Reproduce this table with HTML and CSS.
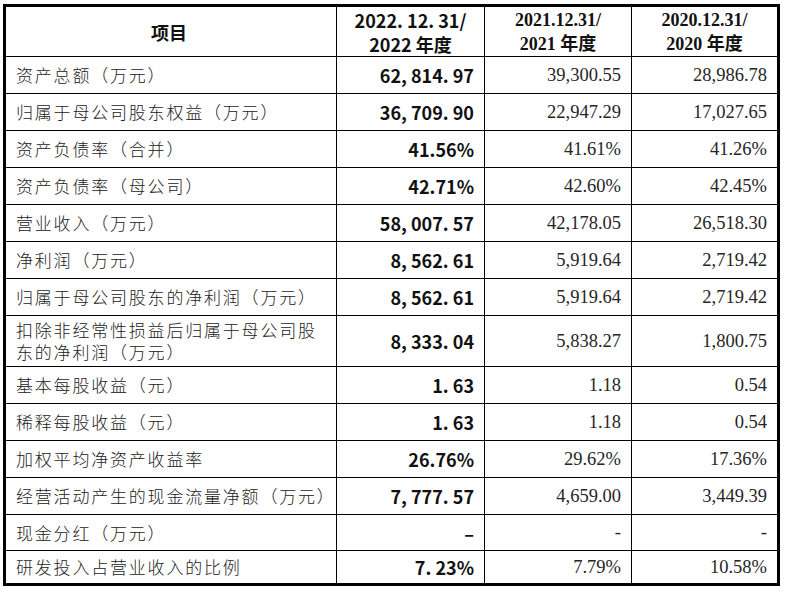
FILE: index.html
```html
<!DOCTYPE html>
<html lang="zh-CN">
<head>
<meta charset="utf-8">
<link rel="stylesheet" href="styles.css">
</head>
<body>
<div class="sheet">
  <div class="grid">
    <div class="cell head label-head">项目</div>
    <div class="cell head hei">2022. 12. 31/<br>2022 年度</div>
    <div class="cell head song">2021.12.31/<br>2021 年度</div>
    <div class="cell head song last-col">2020.12.31/<br>2020 年度</div>

    <div class="cell label">资产总额（万元）</div>
    <div class="cell num bold">62, 814. 97</div>
    <div class="cell num">39,300.55</div>
    <div class="cell num last-col">28,986.78</div>

    <div class="cell label">归属于母公司股东权益（万元）</div>
    <div class="cell num bold">36, 709. 90</div>
    <div class="cell num">22,947.29</div>
    <div class="cell num last-col">17,027.65</div>

    <div class="cell label">资产负债率（合并）</div>
    <div class="cell num bold">41.56%</div>
    <div class="cell num">41.61%</div>
    <div class="cell num last-col">41.26%</div>

    <div class="cell label">资产负债率（母公司）</div>
    <div class="cell num bold">42.71%</div>
    <div class="cell num">42.60%</div>
    <div class="cell num last-col">42.45%</div>

    <div class="cell label">营业收入（万元）</div>
    <div class="cell num bold">58, 007. 57</div>
    <div class="cell num">42,178.05</div>
    <div class="cell num last-col">26,518.30</div>

    <div class="cell label">净利润（万元）</div>
    <div class="cell num bold">8, 562. 61</div>
    <div class="cell num">5,919.64</div>
    <div class="cell num last-col">2,719.42</div>

    <div class="cell label">归属于母公司股东的净利润（万元）</div>
    <div class="cell num bold">8, 562. 61</div>
    <div class="cell num">5,919.64</div>
    <div class="cell num last-col">2,719.42</div>

    <div class="cell label wrap">扣除非经常性损益后归属于母公司股东的净利润（万元）</div>
    <div class="cell num bold">8, 333. 04</div>
    <div class="cell num">5,838.27</div>
    <div class="cell num last-col">1,800.75</div>

    <div class="cell label">基本每股收益（元）</div>
    <div class="cell num bold">1. 63</div>
    <div class="cell num">1.18</div>
    <div class="cell num last-col">0.54</div>

    <div class="cell label">稀释每股收益（元）</div>
    <div class="cell num bold">1. 63</div>
    <div class="cell num">1.18</div>
    <div class="cell num last-col">0.54</div>

    <div class="cell label">加权平均净资产收益率</div>
    <div class="cell num bold">26.76%</div>
    <div class="cell num">29.62%</div>
    <div class="cell num last-col">17.36%</div>

    <div class="cell label">经营活动产生的现金流量净额（万元）</div>
    <div class="cell num bold">7, 777. 57</div>
    <div class="cell num">4,659.00</div>
    <div class="cell num last-col">3,449.39</div>

    <div class="cell label">现金分红（万元）</div>
    <div class="cell num bold">–</div>
    <div class="cell num">-</div>
    <div class="cell num last-col">-</div>

    <div class="cell label end">研发投入占营业收入的比例</div>
    <div class="cell num bold end">7. 23%</div>
    <div class="cell num end">7.79%</div>
    <div class="cell num end last-col">10.58%</div>
  </div>
</div>
</body>
</html>
```

FILE: styles.css
```css
html, body {
  margin: 0;
  padding: 0;
  background: #ffffff;
}

.sheet {
  padding: 4px 0 0 3px;
}

.grid {
  display: grid;
  grid-template-columns: 331px 148px 147px 145px;
  grid-template-rows: 50px repeat(7, 37px) 51px repeat(4, 37px) 36px 32px;
  width: 771px;
  border: 3px solid #000;
}

.cell {
  box-sizing: border-box;
  border-right: 1px solid #000;
  border-bottom: 1px solid #000;
  display: flex;
  align-items: center;
  color: #1a1a1a;
}

.cell.last-col {
  border-right: none;
}

.cell.end {
  border-bottom: none;
}

.head {
  flex-direction: column;
  justify-content: center;
  text-align: center;
  font-weight: bold;
  font-size: 18px;
  line-height: 24px;
  color: #111;
}

.label-head {
  font-family: "Noto Sans CJK SC", sans-serif;
  font-size: 18px;
  padding-right: 4px;
}

.hei {
  font-family: "Noto Sans CJK SC", sans-serif;
  font-size: 18px;
}

.song {
  font-family: "Liberation Serif", "Noto Sans CJK SC", serif;
  font-size: 18px;
}

.label {
  font-family: "Noto Sans CJK SC", sans-serif;
  font-weight: 300;
  font-size: 17px;
  letter-spacing: 1.8px;
  line-height: 22px;
  padding: 0 6px 0 10px;
  color: #222;
  white-space: nowrap;
}

.label.wrap {
  white-space: normal;
}

.num {
  justify-content: flex-end;
  padding-right: 10px;
  font-family: "Liberation Serif", serif;
  font-size: 18.5px;
  color: #262626;
}

.num.bold {
  font-family: "Noto Sans CJK SC", sans-serif;
  font-weight: bold;
  font-size: 18px;
  color: #111;
}
```
